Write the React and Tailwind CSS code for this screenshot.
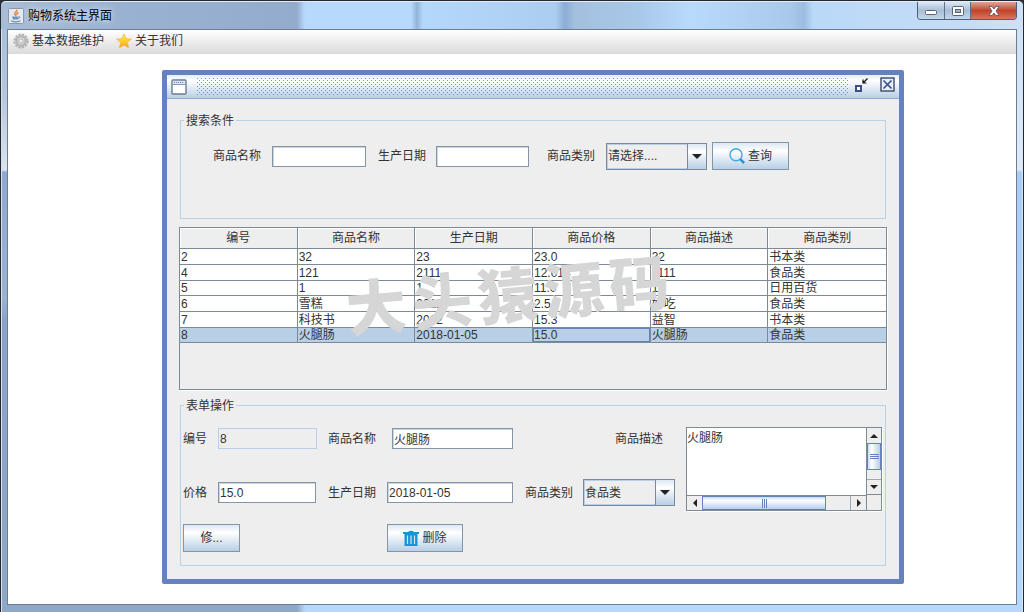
import { useState } from "react";

const columns = ["编号", "商品名称", "生产日期", "商品价格", "商品描述", "商品类别"];

const products = [
  ["2", "32", "23", "23.0", "32", "书本类"],
  ["4", "121", "2111", "12.014", "1111", "食品类"],
  ["5", "1", "1", "11.0", "1", "日用百货"],
  ["6", "雪糕", "2012", "2.5", "好吃", "食品类"],
  ["7", "科技书", "2012", "15.3", "益智", "书本类"],
  ["8", "火腿肠", "2018-01-05", "15.0", "火腿肠", "食品类"],
];

const categories = ["请选择....", "食品类", "书本类", "日用百货"];

const JavaIcon = () => (
  <svg className="size-4 shrink-0" viewBox="0 0 16 16" fill="none">
    <rect x="0.5" y="0.5" width="15" height="15" rx="1" fill="#e4e9ef" stroke="#8a98a8" />
    <path d="M8.8 1.8c.8 1.8-2.6 2.6-2 4.4.2.7.8 1 .9 1.6M10.4 4.5c-1.4.7-2 1.4-1 2.6" stroke="#e8833a" strokeWidth="1.5" />
    <path d="M4 8.500h6.500l-.7 3H5z" fill="#6d8fb5" />
    <path d="M10.500 8.700c2-.5 2.200 1.300-.4 2" stroke="#6d8fb5" />
    <path d="M3 12.800c2.500 1.200 7 1.200 9.500 0" stroke="#6d8fb5" strokeWidth="1.2" />
  </svg>
);

const GearIcon = () => (
  <svg className="size-4 shrink-0" viewBox="0 0 16 16" fill="none">
    <circle cx="8" cy="8" r="6.5" stroke="#b2b2b2" strokeWidth="2" strokeDasharray="2.4 1" />
    <circle cx="8" cy="8" r="4.7" fill="#d2d2d2" stroke="#b4b4b4" strokeWidth="2" />
    <circle cx="8" cy="8" r="2" fill="#eeeeee" stroke="#c0c0c0" />
  </svg>
);

const StarIcon = () => (
  <svg className="size-4 shrink-0" viewBox="0 0 16 16">
    <defs>
      <linearGradient id="star" x1="0" y1="0" x2="0" y2="1">
        <stop offset="0" stopColor="#fde36a" />
        <stop offset="0.5" stopColor="#fdd02f" />
        <stop offset="1" stopColor="#f79a1c" />
      </linearGradient>
    </defs>
    <path d="M8 .8l2.200 4.700 5.200.6-3.900 3.500 1.100 5.200L8 12.200l-4.600 2.600 1.100-5.200L.6 6.100l5.200-.6z" fill="url(#star)" stroke="#f3b04a" strokeWidth="0.6" strokeLinejoin="round" />
  </svg>
);

const SearchIcon = () => (
  <svg className="size-4 shrink-0" viewBox="0 0 16 16" fill="none">
    <circle cx="7" cy="6.8" r="6" stroke="#3fa9e6" strokeWidth="1.4" />
    <path d="M11.300 11.200l3.800 4" stroke="#1f95dc" strokeWidth="2.4" />
  </svg>
);

const TrashIcon = () => (
  <svg className="size-4 shrink-0" viewBox="0 0 16 16" fill="none">
    <path d="M0 2h5q3-2.500 6 0h5v2H0z" fill="#1296db" />
    <path d="M1.500 3h13v13h-13z" fill="#1296db" />
    <path d="M4.500 5.500v8.500M8 5.500v8.500M11.500 5.500v8.500" stroke="#d3e6f4" strokeWidth="1.2" />
  </svg>
);

const Arrow = ({ points }) => (
  <svg className="size-[10px] shrink-0" viewBox="0 0 10 10">
    <polygon points={points} fill="#222222" />
  </svg>
);

const TextField = ({ id, className = "", ...props }) => (
  <input
    id={id}
    type="text"
    className={`h-[21px] shrink-0 border border-[#8495a8] bg-white px-px shadow-[inset_1px_1px_0_#c9d6e4] outline-none disabled:border-[#b8cfe5] disabled:bg-[#eeeeee] disabled:shadow-none ${className}`}
    {...props}
  />
);

const ComboBox = ({ id, className = "", ...props }) => (
  <div className={`relative h-[27px] shrink-0 ${className}`}>
    <select
      id={id}
      className="size-full appearance-none border border-[#7a8a99] bg-[#eeeeee] pl-px pr-5 shadow-[inset_0_0_0_1px_#b8cfe5] outline-none"
      {...props}
    >
      {categories.map((name) => (
        <option key={name}>{name}</option>
      ))}
    </select>
    <span className="pointer-events-none absolute inset-y-px right-px flex w-[19px] items-center justify-center border-l border-[#7a8a99] bg-linear-to-b from-[#dde8f3] via-white via-30% to-[#b8cfe5]">
      <svg className="h-[5px] w-[10px]" viewBox="0 0 10 5">
        <polygon points="0,0 10,0 5,5" fill="#222222" />
      </svg>
    </span>
  </div>
);

const MetalButton = ({ className = "", children }) => (
  <button
    type="button"
    className={`flex h-7 shrink-0 items-center justify-center gap-[3px] border border-[#8295a9] bg-linear-to-b from-[#dde8f3] via-white via-30% to-[#b8cfe5] ${className}`}
  >
    {children}
  </button>
);

const FieldGroup = ({ title, className = "", children }) => (
  <fieldset className={`mx-[13px] border border-[#b8d2ea] ${className}`}>
    <legend className="ml-[3px] h-4 px-[2px] leading-[18px]">{title}</legend>
    {children}
  </fieldset>
);

const WindowButtons = () => (
  <div className="mr-[6px] flex h-[18px] self-start overflow-hidden rounded-b-[4px] border border-t-0 border-[#4f5f75]">
    <button type="button" aria-label="最小化" className="flex w-[27px] items-center justify-center border-r border-[#5f7189] bg-linear-to-b from-[#dbe8f5] via-[#a9bdd4] via-50% to-[#c4d8ec] pt-1">
      <svg className="h-[5px] w-3" viewBox="0 0 12 5">
        <rect x="0.5" y="0.5" width="11" height="4" rx="1" fill="#ffffff" stroke="#5a6372" />
      </svg>
    </button>
    <button type="button" aria-label="最大化" className="flex w-[26px] items-center justify-center border-r border-[#5f7189] bg-linear-to-b from-[#dbe8f5] via-[#a9bdd4] via-50% to-[#c4d8ec]">
      <svg className="h-[10px] w-3" viewBox="0 0 12 10">
        <rect x="0.5" y="0.5" width="11" height="9" rx="1" fill="#ffffff" stroke="#5a6372" />
        <rect x="3.5" y="3.5" width="5" height="3" fill="#9db3cb" stroke="#5a6372" />
      </svg>
    </button>
    <button type="button" aria-label="关闭" className="flex w-[45px] items-center justify-center bg-linear-to-b from-[#e0a294] via-[#c1432c] via-50% to-[#d4765c]">
      <svg className="h-[10px] w-3" viewBox="0 0 12 10">
        <path d="M1 .5h3l2 2.500 2-2.500h3L8 5l3 4.500H8L6 7l-2 2.500H1L4 5z" fill="#ffffff" stroke="#5a5060" strokeWidth="0.8" />
      </svg>
    </button>
  </div>
);

const SearchPanel = () => (
  <FieldGroup title="搜索条件">
    <div className="flex items-center pt-[14px] pb-12 pl-8">
      <label htmlFor="q-name" className="w-[59px] shrink-0">商品名称</label>
      <TextField id="q-name" className="w-[94px]" />
      <label htmlFor="q-date" className="ml-3 w-[58px] shrink-0">生产日期</label>
      <TextField id="q-date" className="w-[93px]" />
      <label htmlFor="q-type" className="ml-[18px] w-[59px] shrink-0">商品类别</label>
      <ComboBox id="q-type" className="w-[101px]" />
      <MetalButton className="ml-[5px] w-[77px]">
        <SearchIcon />
        查询
      </MetalButton>
    </div>
  </FieldGroup>
);

const ProductTable = ({ selected, onSelect }) => (
  <div className="relative mx-3 mt-2 h-[163px] border border-[#7a8a99] shadow-[1px_1px_0_#ffffff]">
    <table className="w-full table-fixed border-separate border-spacing-0">
      <thead>
        <tr className="h-[21px]">
          {columns.map((name) => (
            <th key={name} className="border-r border-b border-[#7a8a99] p-0 pt-px font-normal leading-[19px] shadow-[inset_1px_1px_0_#ffffff] last:border-r-0">
              {name}
            </th>
          ))}
        </tr>
      </thead>
      <tbody>
        {products.map((row, i) => (
          <tr
            key={row[0]}
            onClick={() => onSelect(i)}
            className={`${i % 3 === 2 ? "h-[15px]" : "h-4"} ${i === selected ? "bg-[#b8cfe5]" : "bg-white"}`}
          >
            {row.map((cell, c) => (
              <td
                key={c}
                className={`overflow-hidden border-r border-b border-[#7a8a99] p-0 pl-px leading-[14px] whitespace-nowrap last:border-r-0 ${
                  i === selected && c === 3 ? "shadow-[inset_0_0_0_1px_#6382bf]" : ""
                }`}
              >
                {cell}
              </td>
            ))}
          </tr>
        ))}
      </tbody>
    </table>

    {/* Watermark */}
    <div className="pointer-events-none absolute top-[30px] left-[166px] flex -rotate-5 gap-[6px] text-[60px] leading-[80px] font-black whitespace-nowrap text-[#d6d6d6]">
      {["大", "头", "猿", "源", "码"].map((char) => (
        <span key={char}>{char}</span>
      ))}
    </div>
  </div>
);

const DescriptionBox = ({ value }) => (
  <div className="flex h-[84px] min-w-0 flex-1 flex-col border border-[#7a8a99] shadow-[1px_1px_0_#ffffff]">
    <div className="flex flex-1">
      <textarea
        id="f-desc"
        key={value}
        defaultValue={value}
        className="min-w-0 flex-1 resize-none overflow-hidden bg-white pt-[2px] leading-4 outline-none"
      />
      <div className="flex w-[15px] flex-col border-l border-[#7a8a99]">
        <div className="flex h-[15px] items-center justify-center"><Arrow points="1,7 9,7 5,3" /></div>
        <div className="flex h-[27px] flex-col items-center justify-center gap-px border border-[#6382bf] bg-linear-to-r from-[#c8dbee] via-white via-30% to-[#b8cfe5]">
          <span className="h-px w-[9px] bg-[#6382bf]" />
          <span className="h-px w-[9px] bg-[#6382bf]" />
          <span className="h-px w-[9px] bg-[#6382bf]" />
        </div>
        <div className="flex-1 border-b border-[#9aa9b8]" />
        <div className="flex h-[15px] items-center justify-center border-b border-[#7a8a99]"><Arrow points="1,3 9,3 5,7" /></div>
      </div>
    </div>
    <div className="flex h-[15px]">
      <div className="flex flex-1 border-t border-[#7a8a99]">
        <div className="flex w-[15px] items-center justify-center"><Arrow points="7,1 7,9 3,5" /></div>
        <div className="flex w-[124px] items-center justify-center gap-px border border-[#6382bf] bg-linear-to-b from-[#c8dbee] via-white via-30% to-[#b8cfe5]">
          <span className="h-[9px] w-px bg-[#6382bf]" />
          <span className="h-[9px] w-px bg-[#6382bf]" />
          <span className="h-[9px] w-px bg-[#6382bf]" />
        </div>
        <div className="flex-1 border-r border-[#9aa9b8]" />
        <div className="flex w-[15px] items-center justify-center"><Arrow points="3,1 3,9 7,5" /></div>
      </div>
      <div className="w-[15px] border-l border-[#7a8a99]" />
    </div>
  </div>
);

const EditPanel = ({ product }) => {
  const [id, name, date, price, desc, type] = product;

  return (
    <FieldGroup title="表单操作" className="mt-[7px]">
      <div key={id} className="flex gap-[11px] pt-[14px] pr-[3px] pb-[13px] pl-[2px]">
        <div className="w-[492px] shrink-0">
          <div className="flex h-[23px] items-center">
            <label htmlFor="f-id" className="w-[35px] shrink-0">编号</label>
            <TextField id="f-id" className="w-[99px]" defaultValue={id} disabled />
            <label htmlFor="f-name" className="ml-[11px] w-[64px] shrink-0">商品名称</label>
            <TextField id="f-name" className="w-[121px]" defaultValue={name} />
            <label htmlFor="f-desc" className="ml-auto w-[60px] shrink-0">商品描述</label>
          </div>
          <div className="mt-[29px] flex items-center">
            <label htmlFor="f-price" className="w-[35px] shrink-0">价格</label>
            <TextField id="f-price" className="w-[98px]" defaultValue={price} />
            <label htmlFor="f-date" className="ml-3 w-[59px] shrink-0">生产日期</label>
            <TextField id="f-date" className="w-[126px]" defaultValue={date} />
            <label htmlFor="f-type" className="ml-3 shrink-0">商品类别</label>
            <ComboBox id="f-type" className="ml-auto w-[92px]" defaultValue={type} />
          </div>
          <div className="mt-[18px] flex gap-[147px]">
            <MetalButton className="w-[57px]">修...</MetalButton>
            <MetalButton className="w-[76px]">
              <TrashIcon />
              删除
            </MetalButton>
          </div>
        </div>
        <DescriptionBox value={desc} />
      </div>
    </FieldGroup>
  );
};

const InternalFrame = () => {
  const [selected, setSelected] = useState(5);

  return (
    <section className="mt-4 mr-28 mb-5 ml-[154px] rounded-[2px] border-5 border-[#6482c0] bg-[#eeeeee]">
      <header className="flex h-6 items-center border-b border-[#8ea9d6] bg-linear-to-b from-[#e4edf6] via-white via-25% to-[#b8cfe5] px-1">
        <svg className="size-4 shrink-0" viewBox="0 0 16 16">
          <rect x="1" y="1" width="14" height="14" rx="1" fill="#ffffff" stroke="#6b7b90" strokeWidth="1.4" />
          <path d="M2 2h12v3H2z" fill="#dbe5f1" />
          <path d="M2 5.500h12" stroke="#8a9ab0" />
          <path d="M3 3.500h10" stroke="#6382bf" strokeDasharray="1 1" />
        </svg>
        {/* Drag handle */}
        <div className="mr-[5px] ml-[10px] h-[17px] flex-1 bg-[#6f8fc8] mask-[conic-gradient(at_1px_1px,transparent_75%,#000_0),conic-gradient(at_1px_1px,transparent_75%,#000_0)] mask-size-[4px_4px] mask-position-[0_0,2px_2px]" />
        <button type="button" aria-label="还原" className="mr-3 mb-1">
          <svg className="size-[14px]" viewBox="0 0 14 14" fill="none">
            <rect x="2" y="8" width="5" height="5" fill="#ffffff" stroke="#3b4f86" strokeWidth="2" />
            <path d="M13.500 0.500L9.500 4.500M9 1.500v3.500h3.500" stroke="#111111" strokeWidth="1.2" />
          </svg>
        </button>
        <button type="button" aria-label="关闭窗口" className="mb-1">
          <svg className="size-[15px]" viewBox="0 0 15 15" fill="none">
            <rect x="1" y="1" width="13" height="13" fill="#e6eef7" stroke="#3b4868" strokeWidth="1.4" />
            <path d="M3.500 3.500l8 8M11.500 3.500l-8 8" stroke="#3b4f86" strokeWidth="1.7" />
          </svg>
        </button>
      </header>

      <div className="pt-[13px] pb-[13px]">
        <SearchPanel />
        <ProductTable selected={selected} onSelect={setSelected} />
        <EditPanel product={products[selected]} />
      </div>
    </section>
  );
};

const App = () => (
  <div className="bg-[#2c3038]">
    <div className="flex min-h-screen flex-col rounded-t-[6px] rounded-b-[4px] border border-[#23272e] bg-[linear-gradient(to_right,#8ea8c9_0,#8ea8c9_296px,#b5d8fc_304px,#b5d8fc_100%)] font-['Liberation_Sans','Noto_Sans_CJK_SC',sans-serif] text-xs text-[#333333]">
      {/* Title bar */}
      <header className="flex h-7 items-center rounded-t-[5px] border-t border-[#e3edf8] bg-[linear-gradient(to_right,#a9bcd6_0,#9ab2d1_120px,#93acce_296px,#b7d9fd_304px,#b7d9fd_410px,#93b4da_416px,#b4d8fb_422px,#abcdf0_555px,#8cacd4_564px,#a3c0de_574px,#a9c9ea_640px,#b8dafb_690px,#a9c9ea_790px,#9cbce2_803px,#b9d9f8_812px,#c4dcf7_950px,#cfe0f5_100%)] pl-[7px]">
        <JavaIcon />
        <h1 className="flex-1 pl-1 text-black [text-shadow:0_0_6px_#ffffff]">购物系统主界面</h1>
        <WindowButtons />
      </header>

      <div className="flex flex-1">
        {/* Left glass edge */}
        <div className="w-[6px] border-l border-[#d5e2f0] bg-[linear-gradient(to_bottom,#a9bfdb_0,#b3c6de_60px,#dbe3ee_141px,#8faad0_143px,#9ab3d4_270px,#8aa4c8_290px,#8ea8c9_100%)]" />

        <div className="mb-[7px] flex min-w-0 flex-1 flex-col border border-[#6d7c8f] bg-white">
          <nav className="flex h-6 items-center gap-3 bg-linear-to-b from-white to-[#dadada] pb-[2px] pl-[5px]">
            <button type="button" className="flex items-center gap-[3px]">
              <GearIcon />
              基本数据维护
            </button>
            <button type="button" className="flex items-center gap-[3px]">
              <StarIcon />
              关于我们
            </button>
          </nav>

          <main>
            <InternalFrame />
          </main>
        </div>

        {/* Right glass edge */}
        <div className="w-[6px] border-r border-[#d5e8fa] bg-[linear-gradient(to_bottom,#cfe1f6_0,#dfeaf8_141px,#a9cdf4_143px,#b5d8fc_100%)]" />
      </div>
    </div>
  </div>
);

export default App;
